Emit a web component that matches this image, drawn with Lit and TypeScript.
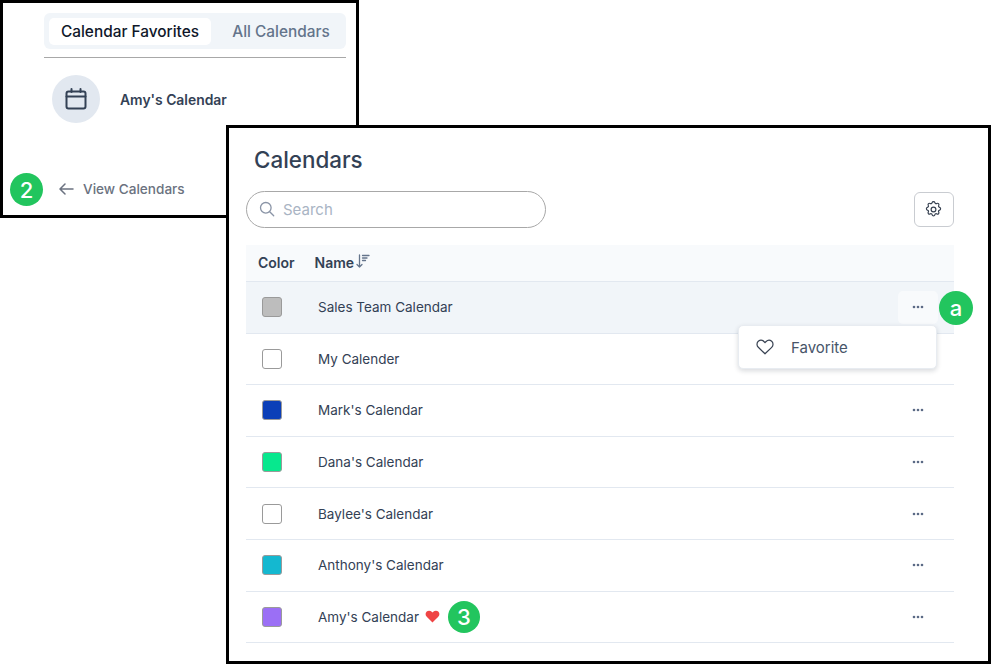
import { LitElement, html, css, svg } from "lit";
import { customElement } from "lit/decorators.js";

const rows = [
  { name: "Sales Team Calendar", color: "#bdbdbd", active: true },
  { name: "My Calender", color: "#ffffff", hideDots: true },
  { name: "Mark's Calendar", color: "#0b3fb8" },
  { name: "Dana's Calendar", color: "#07e88e" },
  { name: "Baylee's Calendar", color: "#ffffff" },
  { name: "Anthony's Calendar", color: "#14b8d0" },
  { name: "Amy's Calendar", color: "#9b6ff5", fav: true },
];

const dots = svg`<svg width="12" height="4" viewBox="0 0 12 4"><circle cx="2" cy="2" r="1.300"/><circle cx="6" cy="2" r="1.300"/><circle cx="10" cy="2" r="1.300"/></svg>`;

@customElement("app-root")
export class AppRoot extends LitElement {
  static styles = css`
    :host { display: block; position: relative; width: 991px; height: 664px; background: #fff; overflow: hidden; font-family: Inter, "Noto Sans", sans-serif; color: #334155; }
    .win { position: absolute; box-sizing: border-box; background: #fff; border: 3px solid #000; }
    .back-win { left: 0; top: 0; width: 359px; height: 218px; padding: 10px 10px 0 41px; display: flex; flex-direction: column; }
    .tabs { display: flex; align-items: center; height: 36px; box-sizing: border-box; padding: 4px 5px; background: #f1f5f9; border-radius: 6px; }
    .tab { height: 27px; display: flex; align-items: center; justify-content: center; font-size: 15.4px; font-weight: 500; border-radius: 5px; }
    .tab.on { width: 162px; background: #fff; color: #0f172a; }
    .tab.off { flex: 1; color: #64748b; padding-left: 10px; }
    .rule { height: 1px; background: #a8a8a8; margin-top: 8px; }
    .fav { display: flex; align-items: center; gap: 20px; margin: 17px 0 0 8px; font-size: 13.9px; font-weight: 600; }
    .fav span { padding-top: 1px; }
    .circle { width: 48px; height: 48px; border-radius: 50%; background: #e2e8f0; display: flex; align-items: center; justify-content: center; }
    .backlink { display: flex; align-items: center; gap: 9px; margin: 58px 0 0 15px; font-size: 13.6px; font-weight: 500; color: #6b7280; }
    .front-win { left: 226px; top: 125px; width: 765px; height: 539px; padding: 0 34px 0 17px; display: flex; flex-direction: column; }
    h1 { margin: 17px 0 0 8px; font-size: 22.4px; line-height: 30px; font-weight: 500; color: #334155; }
    .toolbar { display: flex; align-items: center; justify-content: space-between; margin-top: 16px; }
    .search { width: 300px; height: 37px; box-sizing: border-box; border: 1px solid #a8a8a8; border-radius: 19px; display: flex; align-items: center; gap: 8px; padding: 0 0 1px 12px; font-size: 15px; color: #a9b4c4; }
    .gear { width: 40px; height: 35px; box-sizing: border-box; border: 1px solid #c9ccd1; border-radius: 6px; display: flex; align-items: center; justify-content: center; padding-right: 1px; }
    .head { display: flex; align-items: center; height: 37px; box-sizing: border-box; margin-top: 17px; padding-bottom: 2px; background: #f8fafc; border-bottom: 1px solid #e2e8f0; font-size: 14px; font-weight: 600; }
    .hc { margin-left: 12px; width: 56.500px; }
    .hn { display: flex; align-items: center; gap: 2px; }
    .row { position: relative; display: flex; align-items: center; height: 51.6px; box-sizing: border-box; border-bottom: 1px solid #e2e8f0; font-size: 13.5px; }
    .row.active { background: #f1f5f9; }
    .swatch { width: 20px; height: 20px; box-sizing: border-box; margin-left: 16px; border: 1px solid #9a9a9a; border-radius: 3px; }
    .name { margin-left: 36px; display: flex; align-items: center; gap: 6px; }
    .dots { margin-left: auto; width: 40px; height: 33px; margin-right: 16px; border-radius: 5px; display: flex; align-items: center; justify-content: center; fill: #5b6a85; }
    .row.active .dots { background: #f8fafc; }
    .hidden { visibility: hidden; }
    .menu { position: absolute; left: 509px; top: 197px; width: 199px; height: 44px; box-sizing: border-box; background: #fff; border: 1px solid #e8ecf1; border-radius: 5px; box-shadow: 0 2px 5px rgba(15,23,42,.16); display: flex; align-items: center; gap: 17px; padding-left: 17px; font-size: 15px; color: #475569; }
    .badge { position: absolute; border-radius: 50%; background: #22c55e; color: #fff; display: flex; align-items: center; justify-content: center; font-size: 22px; font-weight: 500; }
    .b2 { left: 10px; top: 173px; width: 33px; height: 33px; }
    .ba { left: 939px; top: 291px; width: 34px; height: 34px; }
    .b3 { left: 448px; top: 601px; width: 32px; height: 32px; }
  `;

  render() {
    return html`
      <section class="win back-win">
        <div class="tabs">
          <div class="tab on">Calendar Favorites</div>
          <div class="tab off">All Calendars</div>
        </div>
        <div class="rule"></div>
        <div class="fav">
          <div class="circle">
            <svg width="24" height="24" viewBox="0 0 24 24" fill="none" stroke="#334155" stroke-width="2" stroke-linecap="round" stroke-linejoin="round"><rect x="2.500" y="4.500" width="19" height="17" rx="2"/><path d="M2.500 9.500h19M7.500 2v3M16.500 2v3"/></svg>
          </div>
          <span>Amy's Calendar</span>
        </div>
        <div class="backlink">
          <svg width="15" height="12" viewBox="0 0 15 12" fill="none" stroke="#6b7280" stroke-width="1.500" stroke-linecap="round" stroke-linejoin="round"><path d="M14 6H1.200M6 1 1 6l5 5"/></svg>
          <span>View Calendars</span>
        </div>
      </section>

      <section class="win front-win">
        <h1>Calendars</h1>
        <div class="toolbar">
          <div class="search">
            <svg width="16" height="16" viewBox="0 0 16 16" fill="none" stroke="#8a94a6" stroke-width="1.300" stroke-linecap="round"><circle cx="6.800" cy="6.800" r="5.300"/><path d="m10.700 10.700 4 4"/></svg>
            <span>Search</span>
          </div>
          <div class="gear">
            <svg width="19" height="19" viewBox="0 0 24 24" fill="none" stroke="#374151" stroke-width="1.500" stroke-linecap="round" stroke-linejoin="round"><path d="M10.300 3.300c.4-1.700 3-1.700 3.400 0a1.700 1.700 0 0 0 2.600 1.100c1.500-.9 3.200.8 2.300 2.300a1.700 1.700 0 0 0 1.100 2.600c1.700.4 1.700 3 0 3.400a1.700 1.700 0 0 0-1.100 2.600c.9 1.500-.8 3.200-2.300 2.300a1.700 1.700 0 0 0-2.600 1.100c-.4 1.700-3 1.700-3.400 0a1.700 1.700 0 0 0-2.600-1.100c-1.500.9-3.200-.8-2.300-2.300a1.700 1.700 0 0 0-1.100-2.600c-1.700-.4-1.700-3 0-3.400a1.700 1.700 0 0 0 1.100-2.600c-.9-1.500.8-3.200 2.300-2.300a1.700 1.700 0 0 0 2.600-1.100Z"/><circle cx="12" cy="12" r="3"/></svg>
          </div>
        </div>
        <div class="head">
          <div class="hc">Color</div>
          <div class="hn">
            <span>Name</span>
            <svg width="14" height="16" viewBox="0 0 14 16" fill="none" stroke="#64748b" stroke-width="1.300" stroke-linecap="round" stroke-linejoin="round"><path d="M3.500 1v12M1 10.500 3.500 13 6 10.500M6.500 1.500h6.500M6.500 4h4.500M6.500 6.500h3"/></svg>
          </div>
        </div>
        ${rows.map(
          (r) => html`
            <div class="row ${r.active ? "active" : ""}">
              <div class="swatch" style="background:${r.color}"></div>
              <div class="name">
                <span>${r.name}</span>
                ${r.fav
                  ? html`<svg width="15" height="13" viewBox="0 0 16 14"><path fill="#ef4444" d="M8 13.500 1.800 7.300C.1 5.600.2 3 1.800 1.600 3.400.3 5.800.5 7.200 2L8 2.800 8.800 2C10.200.5 12.600.3 14.200 1.600c1.600 1.400 1.700 4 0 5.700L8 13.500Z"/></svg>`
                  : ""}
              </div>
              <div class="dots ${r.hideDots ? "hidden" : ""}">${dots}</div>
            </div>
          `
        )}
        <div class="menu">
          <svg width="18" height="16" viewBox="0 0 18 16" fill="none" stroke="#374151" stroke-width="1.200" stroke-linejoin="round"><path d="M9 14.800 2.300 8.300C.5 6.500.6 3.700 2.300 2.200 4 .8 6.400 1 7.900 2.500L9 3.700l1.100-1.200C11.600 1 14 .8 15.700 2.200c1.700 1.500 1.800 4.300 0 6.100L9 14.800Z"/></svg>
          <span>Favorite</span>
        </div>
      </section>

      <div class="badge b2">2</div>
      <div class="badge ba">a</div>
      <div class="badge b3">3</div>
    `;
  }
}
